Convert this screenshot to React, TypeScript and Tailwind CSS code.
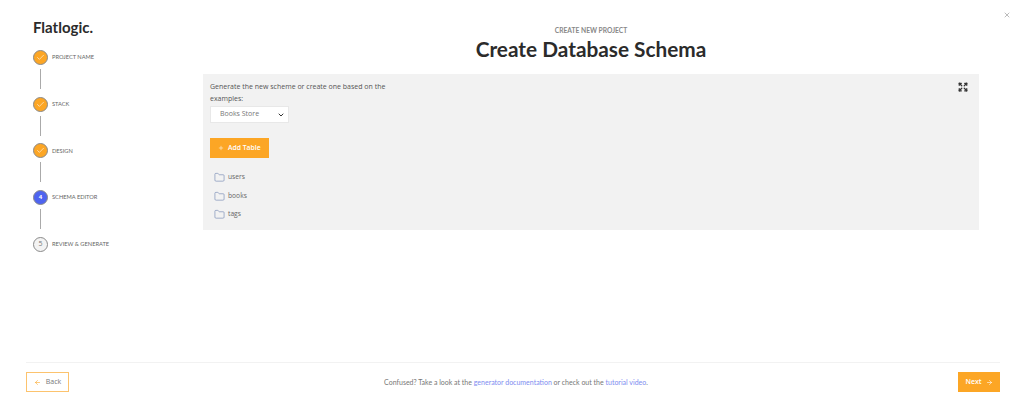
import { ArrowLeft, ArrowRight, Check, ChevronDown, Expand, Folder, Plus, X } from 'lucide-react';

const steps = [
  { label: 'PROJECT NAME', status: 'done' },
  { label: 'STACK', status: 'done' },
  { label: 'DESIGN', status: 'done' },
  { label: 'SCHEMA EDITOR', status: 'active', num: 4 },
  { label: 'REVIEW & GENERATE', status: 'todo', num: 5 },
];

const tables = ['users', 'books', 'tags'];

const StepCircle = ({ status, num }: { status: string; num?: number }) => {
  if (status === 'done') {
    return (
      <div className="w-[15px] h-[15px] rounded-full bg-[#fca625] border border-[#8a8a8a] flex items-center justify-center">
        <Check size={9} color="#fff" strokeWidth={1.5} />
      </div>
    );
  }
  if (status === 'active') {
    return (
      <div className="w-[15px] h-[15px] rounded-full bg-[#4e64f0] border border-[#8a8a8a] flex items-center justify-center text-white text-[6px] font-bold">
        {num}
      </div>
    );
  }
  return (
    <div className="w-[15px] h-[15px] rounded-full bg-[#f3f3f3] border border-[#8a8a8a] flex items-center justify-center text-[#777] text-[7px]">
      {num}
    </div>
  );
};

export default function App() {
  return (
    <div className="relative h-[400px] w-[1024px] bg-white flex flex-col overflow-hidden font-['Open_Sans',sans-serif] text-[#555]">
      <button className="absolute top-[11px] right-[13px] text-[#999]">
        <X size={8} />
      </button>

      <div className="flex flex-1 min-h-0">
        {/* Stepper */}
        <div className="w-[203px] shrink-0 pl-[33px] pt-[17px]">
          <div className="font-['Lato',sans-serif] text-[#2b2b2b] text-[15px] leading-[21px] font-bold mb-[12px]">
            Flatlogic.
          </div>
          {steps.map((step, index) => (
            <div key={step.label}>
              <div className="flex items-center gap-[4px] h-[15px]">
                <StepCircle status={step.status} num={step.num} />
                <span className="font-['Lato',sans-serif] text-[5.7px] text-[#666]">{step.label}</span>
              </div>
              {index < steps.length - 1 && <div className="w-px h-[20px] bg-[#aaa] ml-[7px] mt-[4px] mb-[7.67px]" />}
            </div>
          ))}
        </div>

        {/* Main */}
        <div className="flex-1 pt-[25px] pr-[45px]">
          <div className="font-['Lato',sans-serif] text-center text-[6.7px] leading-[10px] font-bold text-[#888]">
            CREATE NEW PROJECT
          </div>
          <h1 className="font-['Lato',sans-serif] text-center text-[#2b2b2b] text-[20.8px] leading-[30px] font-bold -mt-px mb-[10px]">
            Create Database Schema
          </h1>

          <div className="relative bg-[#f2f2f2] h-[156px] pl-[7px] pt-[7px]">
            <button className="absolute top-[8px] right-[11px] text-[#333]">
              <Expand size={10} strokeWidth={3} />
            </button>
            <p className="text-[7px] leading-[12px] text-[#555] w-[190px]">
              Generate the new scheme or create one based on the examples:
            </p>
            <div className="mt-[1px] w-[79px] h-[17px] bg-white border border-[#e8e8e8] flex items-center justify-between pl-[9px] pr-[3px] text-[7px] text-[#777]">
              <span>Books Store</span>
              <ChevronDown size={8} color="#333" strokeWidth={3} />
            </div>
            <button className="mt-[15px] flex items-center gap-[4px] w-[59px] h-[20px] bg-[#fca625] text-white text-[6.8px] font-semibold pl-[8px]">
              <Plus size={6} strokeWidth={2} />
              Add Table
            </button>
            <div className="mt-[14px] flex flex-col gap-[7.5px] pl-[4px]">
              {tables.map((table) => (
                <div key={table} className="flex items-center gap-[3px] h-[11px] text-[6.7px] text-[#666]">
                  <Folder size={11} color="#6078a8" strokeWidth={1.2} />
                  <span>{table}</span>
                </div>
              ))}
            </div>
          </div>
        </div>
      </div>

      {/* Footer */}
      <div className="ml-[26px] mr-[24px] mb-[8px] border-t border-[#f2f2f2] pt-[9px] flex items-center justify-between h-[30px]">
        <button className="w-[43px] h-[20px] border border-[#fcc36e] flex items-center justify-center gap-[5px] text-[7px] text-[#777]">
          <ArrowLeft size={7} color="#fca625" />
          Back
        </button>
        <p className="font-['Lato',sans-serif] pl-[5px] text-[7px] text-[#777]">
          Confused? Take a look at the <a className="text-[#7e8cf0]">generator documentation</a> or check out the{' '}
          <a className="text-[#7e8cf0]">tutorial video</a>.
        </p>
        <button className="w-[42px] h-[20px] bg-[#fca625] flex items-center justify-center gap-[4px] text-[7px] font-semibold text-white">
          Next
          <ArrowRight size={7} />
        </button>
      </div>
    </div>
  );
}
